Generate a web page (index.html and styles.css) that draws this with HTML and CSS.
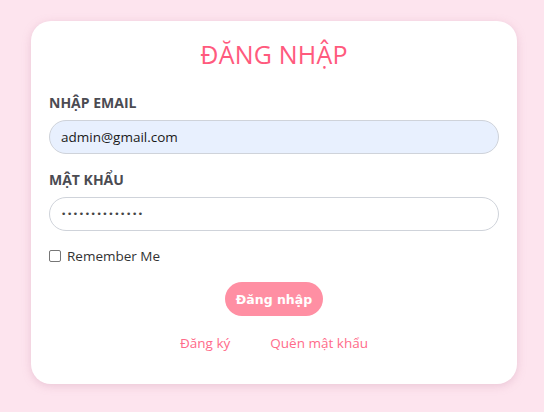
FILE: index.html
```html
<!DOCTYPE html>
<html lang="vi">
<head>
<meta charset="utf-8">
<link rel="stylesheet" href="styles.css">
</head>
<body>
<div class="page">
  <form class="card">
    <h1 class="title">ĐĂNG NHẬP</h1>
    <label class="label">NHẬP EMAIL</label>
    <div class="input filled">admin@gmail.com</div>
    <label class="label">MẬT KHẨU</label>
    <div class="input"><span class="dots">••••••••••••••</span></div>
    <div class="remember">
      <span class="box"></span>
      <span>Remember Me</span>
    </div>
    <div class="actions"><button type="button" class="btn">Đăng nhập</button></div>
    <div class="links">
      <a class="link">Đăng ký</a>
      <a class="link">Quên mật khẩu</a>
    </div>
  </form>
</div>
</body>
</html>
```
FILE: styles.css
```css
* { box-sizing: border-box; }
html, body { margin: 0; padding: 0; }
body {
  background: #fde4ee;
  font-family: "Open Sans", "Noto Sans", sans-serif;
  width: 544px;
  height: 412px;
  overflow: hidden;
}
.page {
  padding: 21px 27px 0 31px;
}
.card {
  width: 486px;
  height: 363px;
  background: #ffffff;
  border-radius: 20px;
  box-shadow: 0 2px 8px rgba(200, 140, 170, 0.35);
  padding: 16px 18px 0 18px;
  display: flex;
  flex-direction: column;
}
.title {
  margin: 0;
  text-align: center;
  font-size: 25px;
  font-weight: 400;
  color: #ff5a7d;
  line-height: 34px;
  letter-spacing: 0.2px;
}
.label {
  display: block;
  margin-top: 22px;
  font-size: 14px;
  font-weight: 700;
  color: #4b4b52;
  line-height: 19px;
}
.label + .input { margin-top: 8px; }
.input + .label { margin-top: 16px; }
.input {
  height: 34px;
  border: 1px solid #cfd3da;
  border-radius: 17px;
  padding: 0 11px;
  display: flex;
  align-items: center;
  font-size: 13.5px;
  color: #1a1a1a;
  background: #ffffff;
}
.input.filled { background: #e8f0fe; }
.dots {
  font-family: "DejaVu Sans", sans-serif;
  font-size: 9px;
  letter-spacing: 0.6px;
  color: #444;
}
.remember {
  margin-top: 16px;
  display: flex;
  align-items: center;
  gap: 6px;
  font-size: 13.5px;
  color: #333;
  line-height: 18px;
}
.box {
  width: 12px;
  height: 12px;
  border: 1px solid #767676;
  border-radius: 2px;
  background: #fff;
}
.actions {
  margin-top: 17px;
  display: flex;
  justify-content: center;
}
.btn {
  width: 98px;
  height: 34px;
  border: none;
  border-radius: 17px;
  background: #ff8fa3;
  color: #ffffff;
  font-family: "DejaVu Sans", sans-serif;
  font-weight: 700;
  font-size: 12.5px;
  padding: 0;
}
.links {
  margin-top: 18px;
  display: flex;
  justify-content: center;
  gap: 40px;
  font-size: 13.5px;
  color: #ff6b8a;
  line-height: 19px;
}
```
